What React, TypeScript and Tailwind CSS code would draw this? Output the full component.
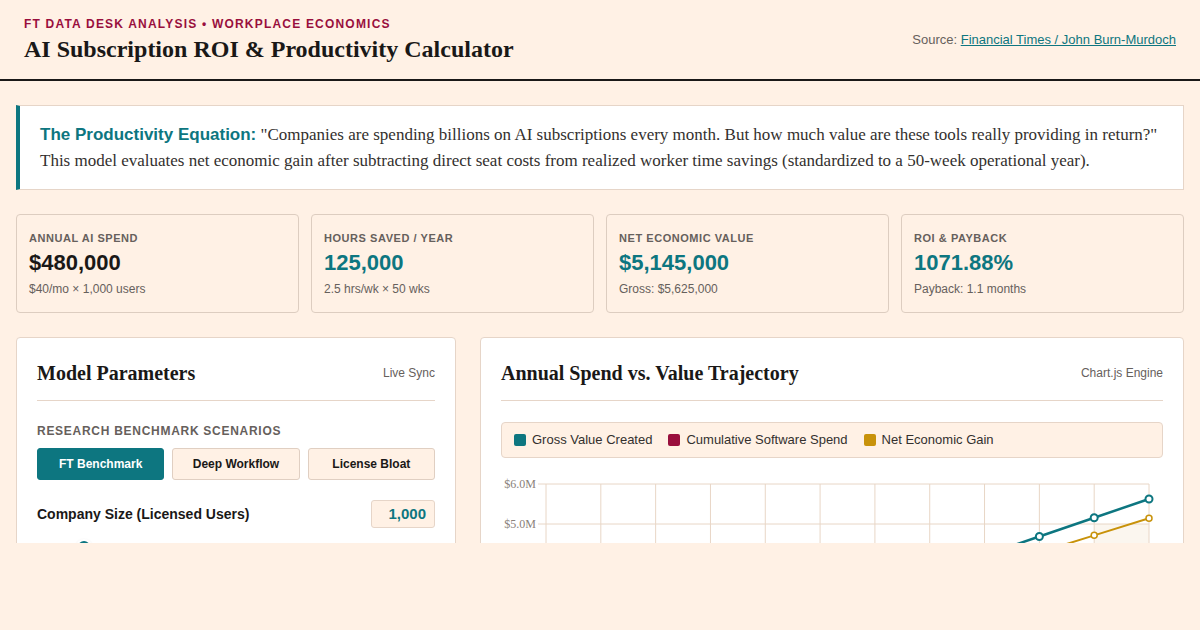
import { useState } from 'react'

const SANS = "font-['Liberation_Sans',Arial,sans-serif]"
const SERIF = "font-['Liberation_Serif','Times_New_Roman',serif]"

const kpis = [
  { label: 'Annual AI Spend', value: '$480,000', sub: '$40/mo × 1,000 users', teal: false },
  { label: 'Hours Saved / Year', value: '125,000', sub: '2.5 hrs/wk × 50 wks', teal: true },
  { label: 'Net Economic Value', value: '$5,145,000', sub: 'Gross: $5,625,000', teal: true },
  { label: 'ROI & Payback', value: '1071.88%', sub: 'Payback: 1.1 months', teal: true },
]

const scenarios = ['FT Benchmark', 'Deep Workflow', 'License Bloat']

/** Cumulative monthly series, in $M. */
const months = Array.from({ length: 12 }, (_, i) => i + 1)
const gross = months.map((m) => (5.625 * m) / 12)
const spend = months.map((m) => 0.04 * m)
const net = months.map((_, i) => gross[i] - spend[i])

function TrajectoryChart() {
  const x0 = 45
  const x1 = 648
  const step = (x1 - x0) / 11
  const xs = (i: number) => x0 + i * step
  const ys = (v: number) => 10 + (6 - v) * 40
  const pts = (d: number[]) => d.map((v, i) => `${xs(i)},${ys(v)}`).join(' ')

  return (
    <svg width={662} height={280} className="block">
      <rect x={xs(10)} y={ys(5)} width={x1 - xs(10)} height={ys(0) - ys(5)} fill="#fbf6ef" />
      {[6, 5, 4, 3, 2, 1, 0].map((v) => (
        <g key={v}>
          <line x1={x0 - 8} x2={x1} y1={ys(v)} y2={ys(v)} stroke="#e8d6c6" strokeWidth={1} />
          <text x={x0 - 10} y={ys(v) + 4} textAnchor="end" fontFamily="'Liberation Serif', serif" fontSize={12} fill="#8a817a">
            ${v.toFixed(1)}M
          </text>
        </g>
      ))}
      {months.map((_, i) => (
        <line key={i} x1={xs(i)} x2={xs(i)} y1={ys(6)} y2={ys(0) + 6} stroke="#e8d6c6" strokeWidth={1} />
      ))}
      <polyline points={pts(spend)} fill="none" stroke="#990f3d" strokeWidth={2} />
      <polyline points={pts(net)} fill="none" stroke="#c8920a" strokeWidth={2} />
      <polyline points={pts(gross)} fill="none" stroke="#0d7680" strokeWidth={2.5} />
      {net.map((v, i) => (
        <circle key={'n' + i} cx={xs(i)} cy={ys(v)} r={3} fill="#fff" stroke="#c8920a" strokeWidth={1.5} />
      ))}
      {gross.map((v, i) => (
        <circle key={'g' + i} cx={xs(i)} cy={ys(v)} r={3.5} fill="#fff" stroke="#0d7680" strokeWidth={2} />
      ))}
    </svg>
  )
}

export default function App() {
  const [active, setActive] = useState(0)

  return (
    <div className={`w-[1200px] h-[630px] bg-[#fff1e5] text-[#1a1817] ${SANS}`}>
      <div className="h-[543px] overflow-hidden">
        <header className="flex items-center justify-between border-b-2 border-[#1a1817] px-6 pt-4 pb-[15px]">
          <div>
            <div className="text-[12px] leading-4 font-bold uppercase tracking-[0.1em] text-[#990f3d]">
              FT Data Desk Analysis • Workplace Economics
            </div>
            <h1 className={`mt-[2px] text-[24px] leading-[30px] font-bold ${SERIF}`}>
              AI Subscription ROI &amp; Productivity Calculator
            </h1>
          </div>
          <div className="text-[13px] text-[#66605c]">
            Source: <a className="text-[#0d7680] underline">Financial Times / John Burn-Murdoch</a>
          </div>
        </header>

        <main className="flex flex-col gap-6 px-4 pt-6">
          <section className="border border-[#e6d5c8] border-l-4 border-l-[#0d7680] bg-white px-5 pt-4 pb-[15px]">
            <p className={`text-[17px] leading-[26px] text-[#33302e] ${SERIF}`}>
              <strong className={`font-bold text-[#0d7680] ${SANS}`}>The Productivity Equation:</strong>{' '}
              "Companies are spending billions on AI subscriptions every month. But how much value are these tools really
              providing in return?" This model evaluates net economic gain after subtracting direct seat costs from realized
              worker time savings (standardized to a 50-week operational year).
            </p>
          </section>

          <section className="grid grid-cols-4 gap-3">
            {kpis.map((k) => (
              <div key={k.label} className="rounded border border-[#ddcdc0] px-3 pt-4 pb-[15px]">
                <div className="text-[11px] leading-[14px] font-bold uppercase tracking-[0.05em] text-[#66605c]">{k.label}</div>
                <div className={`mt-1 text-[22px] leading-7 font-bold ${k.teal ? 'text-[#0d7680]' : 'text-[#1a1817]'}`}>
                  {k.value}
                </div>
                <div className="mt-1 text-[12px] leading-4 text-[#66605c]">{k.sub}</div>
              </div>
            ))}
          </section>

          <section className="flex gap-6">
            <div className="w-[440px] shrink-0 rounded border border-[#e6d5c8] bg-white p-5">
              <div className="flex items-center justify-between border-b border-[#e6d5c8] pb-3">
                <h2 className={`text-[20px] leading-[30px] font-bold ${SERIF}`}>Model Parameters</h2>
                <span className="text-[12px] text-[#66605c]">Live Sync</span>
              </div>
              <div className="mt-[21px] text-[12px] leading-[18px] font-bold uppercase tracking-[0.06em] text-[#66605c]">
                Research Benchmark Scenarios
              </div>
              <div className="mt-2 grid grid-cols-3 gap-2">
                {scenarios.map((s, i) => (
                  <button
                    key={s}
                    onClick={() => setActive(i)}
                    className={`h-8 rounded-[3px] border text-[12px] font-bold ${
                      active === i
                        ? 'border-[#0d7680] bg-[#0d7680] text-white'
                        : 'border-[#e0cfc2] bg-[#fff1e5] text-[#1a1817]'
                    }`}
                  >
                    {s}
                  </button>
                ))}
              </div>
              <div className="mt-5 flex items-center justify-between">
                <label className="text-[14px] font-bold text-[#1a1817]">Company Size (Licensed Users)</label>
                <div className="flex h-7 w-16 items-center justify-end rounded-[3px] border border-[#e6d5c8] bg-[#fff1e5] px-2 text-[15px] font-bold text-[#0d7680]">
                  1,000
                </div>
              </div>
              <div className="relative mt-3 h-4">
                <div className="absolute left-0 right-0 top-[7px] h-[3px] rounded bg-[#e6d5c8]" />
                <div className="absolute left-[39px] -top-[1px] h-4 w-4 rounded-full border-2 border-white bg-[#0d7680] shadow" />
              </div>
            </div>

            <div className="flex-1 rounded border border-[#e6d5c8] bg-white p-5">
              <div className="flex items-center justify-between border-b border-[#e6d5c8] pb-3">
                <h2 className={`text-[20px] leading-[30px] font-bold ${SERIF}`}>Annual Spend vs. Value Trajectory</h2>
                <span className="text-[12px] text-[#66605c]">Chart.js Engine</span>
              </div>
              <div className="mt-[21px] flex h-9 items-center gap-4 rounded border border-[#e6d5c8] bg-[#fff1e5] px-3 text-[13px] text-[#33302e]">
                <span className="flex items-center gap-1.5">
                  <i className="h-3 w-3 rounded-[2px] bg-[#0d7680]" /> Gross Value Created
                </span>
                <span className="flex items-center gap-1.5">
                  <i className="h-3 w-3 rounded-[2px] bg-[#990f3d]" /> Cumulative Software Spend
                </span>
                <span className="flex items-center gap-1.5">
                  <i className="h-3 w-3 rounded-[2px] bg-[#c8920a]" /> Net Economic Gain
                </span>
              </div>
              <div className="mt-4">
                <TrajectoryChart />
              </div>
            </div>
          </section>
        </main>
      </div>
    </div>
  )
}
